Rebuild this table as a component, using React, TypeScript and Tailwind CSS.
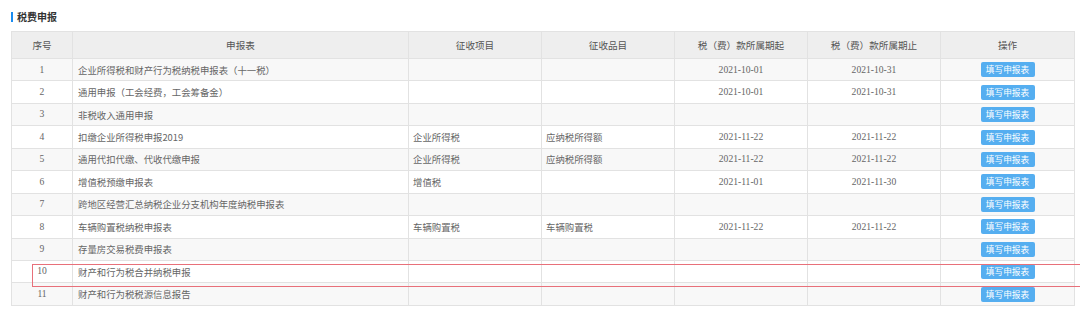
import React from "react";

type Row = {
  no: number;
  name: string;
  item: string;
  sub: string;
  start: string;
  end: string;
};

const ROWS: Row[] = [
  { no: 1, name: "企业所得税和财产行为税纳税申报表（十一税）", item: "", sub: "", start: "2021-10-01", end: "2021-10-31" },
  { no: 2, name: "通用申报（工会经费，工会筹备金）", item: "", sub: "", start: "2021-10-01", end: "2021-10-31" },
  { no: 3, name: "非税收入通用申报", item: "", sub: "", start: "", end: "" },
  { no: 4, name: "扣缴企业所得税申报2019", item: "企业所得税", sub: "应纳税所得额", start: "2021-11-22", end: "2021-11-22" },
  { no: 5, name: "通用代扣代缴、代收代缴申报", item: "企业所得税", sub: "应纳税所得额", start: "2021-11-22", end: "2021-11-22" },
  { no: 6, name: "增值税预缴申报表", item: "增值税", sub: "", start: "2021-11-01", end: "2021-11-30" },
  { no: 7, name: "跨地区经营汇总纳税企业分支机构年度纳税申报表", item: "", sub: "", start: "", end: "" },
  { no: 8, name: "车辆购置税纳税申报表", item: "车辆购置税", sub: "车辆购置税", start: "2021-11-22", end: "2021-11-22" },
  { no: 9, name: "存量房交易税费申报表", item: "", sub: "", start: "", end: "" },
  { no: 10, name: "财产和行为税合并纳税申报", item: "", sub: "", start: "", end: "" },
  { no: 11, name: "财产和行为税税源信息报告", item: "", sub: "", start: "", end: "" },
];

const HEADERS = ["序号", "申报表", "征收项目", "征收品目", "税（费）款所属期起", "税（费）款所属期止", "操作"];
const WIDTHS = ["w-[61px]", "w-[336px]", "w-[133px]", "w-[133px]", "w-[133px]", "w-[133px]", "w-[134px]"];

const cjk = "font-['Noto_Sans_CJK_SC','Noto_Sans',sans-serif]";
const serif = "font-['Liberation_Serif','Noto_Sans_CJK_SC',serif]";

export default function App() {
  return (
    <div className={`relative h-[336px] w-[1080px] overflow-hidden bg-white ${cjk}`}>
      <div className="flex h-[31px] items-start pl-[11px] pt-[11px]">
        <span className="mt-[1px] h-[10px] w-[2px] bg-[#1a8cf0]" />
        <span className="ml-[4px] text-[10px] font-bold leading-[12px] text-[#333]">税费申报</span>
      </div>
      <div className="pl-[11px]">
        <table className="table-fixed border-collapse border border-[#e2e2e2] text-[9.4px] text-[#666]">
          <colgroup>
            {WIDTHS.map((w, i) => (
              <col key={i} className={w} />
            ))}
          </colgroup>
          <thead>
            <tr className="h-[27px] bg-[#eeeeee]">
              {HEADERS.map((h) => (
                <th key={h} className="border border-[#e2e2e2] text-center text-[9.6px] font-normal text-[#555]">
                  {h}
                </th>
              ))}
            </tr>
          </thead>
          <tbody>
            {ROWS.map((r) => (
              <tr key={r.no} className={`h-[22.45px] ${r.no % 2 === 1 ? "bg-[#f8f8f8]" : "bg-white"}`}>
                <td className={`border border-[#e2e2e2] text-center ${serif} text-[9.6px]`}>{r.no}</td>
                <td className="border border-[#e2e2e2] pl-[5px]">{r.name}</td>
                <td className="border border-[#e2e2e2] pl-[4px]">{r.item}</td>
                <td className="border border-[#e2e2e2] pl-[4px]">{r.sub}</td>
                <td className={`border border-[#e2e2e2] text-center ${serif} text-[9.6px]`}>{r.start}</td>
                <td className={`border border-[#e2e2e2] text-center ${serif} text-[9.6px]`}>{r.end}</td>
                <td className="border border-[#e2e2e2] p-0">
                  <div className="flex justify-center">
                    <span className="flex h-[15px] w-[54px] items-center justify-center rounded-[2px] bg-[#55aef0] text-[8.7px] text-white">
                      填写申报表
                    </span>
                  </div>
                </td>
              </tr>
            ))}
          </tbody>
        </table>
      </div>
      <div className="absolute left-[32px] top-[263.5px] h-[23.5px] w-[1060px] border border-[#e8707a]" />
    </div>
  );
}
